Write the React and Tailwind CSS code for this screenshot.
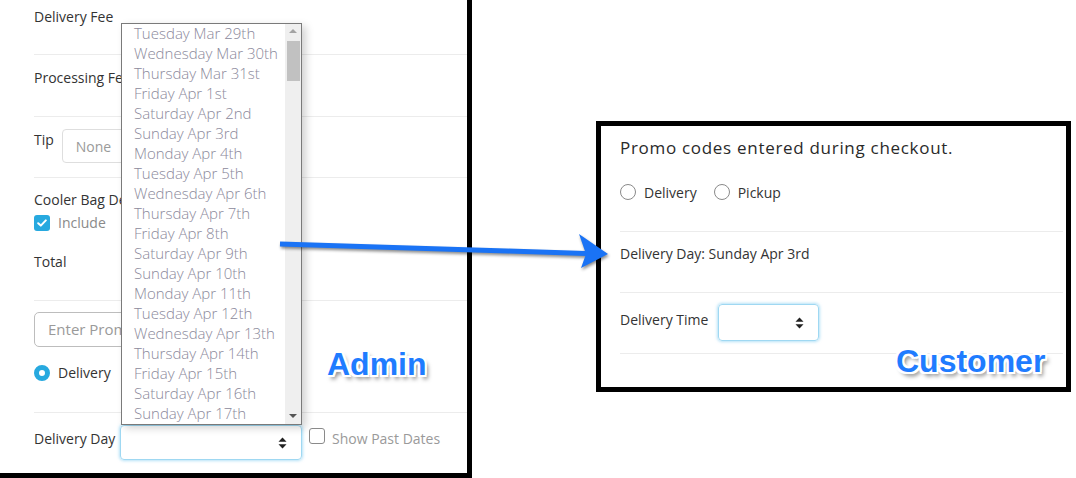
import React from "react";

const days = [
  "Tuesday Mar 29th",
  "Wednesday Mar 30th",
  "Thursday Mar 31st",
  "Friday Apr 1st",
  "Saturday Apr 2nd",
  "Sunday Apr 3rd",
  "Monday Apr 4th",
  "Tuesday Apr 5th",
  "Wednesday Apr 6th",
  "Thursday Apr 7th",
  "Friday Apr 8th",
  "Saturday Apr 9th",
  "Sunday Apr 10th",
  "Monday Apr 11th",
  "Tuesday Apr 12th",
  "Wednesday Apr 13th",
  "Thursday Apr 14th",
  "Friday Apr 15th",
  "Saturday Apr 16th",
  "Sunday Apr 17th",
];

function Carets() {
  return (
    <svg width="9" height="12" viewBox="0 0 9 12">
      <path d="M4.5 0.5 L8.5 4.8 L0.5 4.8 Z" fill="#222" />
      <path d="M4.5 11.5 L8.5 7.2 L0.5 7.2 Z" fill="#222" />
    </svg>
  );
}

const labelShadow =
  "[text-shadow:-2px_-2px_0_#fff,2px_-2px_0_#fff,-2px_2px_0_#fff,2px_2px_0_#fff,0_2px_0_#fff,0_-2px_0_#fff,2px_0_0_#fff,-2px_0_0_#fff,3px_4px_4px_rgba(0,0,0,0.5)]";

export default function App() {
  return (
    <div
      className="relative flex items-start w-[1076px] h-[478px] overflow-hidden bg-white text-[#333]"
      style={{ fontFamily: '"Open Sans", "Liberation Sans", sans-serif' }}
    >
      {/* Admin panel */}
      <div className="relative shrink-0 w-[472px] h-[478px] bg-white border-r-[5px] border-b-[5px] border-black pl-[34px] flex flex-col text-[14px]">
        <div className="h-[55px] border-b border-[#ececec] pt-[7px] leading-5">Delivery Fee</div>
        <div className="h-[62px] border-b border-[#ececec] pt-[13px] leading-5">
          <span className="block w-[87px] overflow-hidden whitespace-nowrap">Processing Fee</span>
        </div>
        <div className="h-[61px] border-b border-[#ececec] pt-[12px] flex items-start gap-[8px]">
          <span className="leading-5 mt-[1px]">Tip</span>
          <div className="w-[200px] h-[34px] border border-[#dedede] rounded-[4px] pl-[13px] flex items-center text-[#9a9a9a]">None</div>
        </div>
        <div className="h-[123px] border-b border-[#ececec] pt-[12px] flex flex-col">
          <span className="block w-[87px] overflow-hidden whitespace-nowrap leading-5">Cooler Bag Deposit</span>
          <div className="mt-[5px] h-[16px] flex items-center gap-[8px]">
            <span className="w-[16px] h-[16px] rounded-[3px] bg-[#27a9df] flex items-center justify-center">
              <svg width="10" height="8" viewBox="0 0 10 8">
                <path d="M1.2 4.2 L3.8 6.6 L8.8 1.4" stroke="#fff" strokeWidth="2" fill="none" strokeLinecap="round" strokeLinejoin="round" />
              </svg>
            </span>
            <span className="text-[#8a8a8a] leading-5">Include</span>
          </div>
          <span className="mt-[21px] leading-5">Total</span>
        </div>
        <div className="h-[112px] border-b border-[#ececec] pt-[11px] flex flex-col">
          <div className="w-[250px] h-[35px] border border-[#bdbdbd] rounded-[5px] pl-[13px] flex items-center text-[15px] text-[#9a9a9a]">
            <span className="block w-[73px] overflow-hidden whitespace-nowrap">Enter Promo Code</span>
          </div>
          <div className="mt-[18px] h-[16px] flex items-center gap-[8px]">
            <span className="w-[16px] h-[16px] rounded-full border-[5px] border-[#27a9df] bg-white" />
            <span className="leading-5">Delivery</span>
          </div>
        </div>
        <div className="pt-[12px] flex items-start">
          <span className="mt-[4px] leading-5 w-[86px]">Delivery Day</span>
          <div className="w-[182px] h-[35px] rounded-[4px] border border-[#9fd8f2] shadow-[0_0_3px_1px_rgba(120,200,240,0.55)] flex items-center justify-end pr-[14px]">
            <Carets />
          </div>
          <span className="mt-[3px] ml-[7px] w-[16px] h-[16px] rounded-[3px] border border-[#8a8a8a] bg-white" />
          <span className="mt-[4px] ml-[7px] leading-5 text-[#9a9a9a]">Show Past Dates</span>
        </div>

        {/* dropdown list */}
        <div className="absolute left-[121px] top-[23px] w-[181px] h-[402px] bg-white border border-[#7a7a7a] shadow-[4px_3px_8px_rgba(0,0,0,0.18)] flex">
          <div className="flex-1 pl-[12px] -mt-[1px] flex flex-col font-light text-[15px] text-[#8b899b]">
            {days.map((d) => (
              <div key={d} className="h-[20px] leading-[20px] whitespace-nowrap">{d}</div>
            ))}
          </div>
          <div className="w-[16px] bg-[#efefef] flex flex-col items-center">
            <svg width="16" height="17" viewBox="0 0 16 17">
              <path d="M8 5 L12 9 L4 9 Z" fill="#a3a3a3" />
            </svg>
            <div className="w-[13px] h-[40px] bg-[#c1c1c1]" />
            <div className="flex-1" />
            <svg width="16" height="17" viewBox="0 0 16 17">
              <path d="M8 11 L12 7 L4 7 Z" fill="#555" />
            </svg>
          </div>
        </div>
      </div>

      {/* Customer panel */}
      <div className="shrink-0 ml-[124px] mt-[121px] w-[475px] h-[271px] border-[5px] border-black bg-white pl-[19px] pr-[3px] flex flex-col">
        <div className="h-[106px] border-b border-[#ececec] pt-[10px] flex flex-col">
          <span className="text-[17px] leading-6 tracking-[0.7px] text-[#2a2a2a]">Promo codes entered during checkout.</span>
          <div className="mt-[22px] h-[20px] flex items-center text-[14px]">
            <span className="w-[16px] h-[16px] rounded-full border border-[#8a8a8a] bg-white" />
            <span className="ml-[8px]">Delivery</span>
            <span className="ml-[17px] w-[16px] h-[16px] rounded-full border border-[#8a8a8a] bg-white" />
            <span className="ml-[8px]">Pickup</span>
          </div>
        </div>
        <div className="h-[61px] border-b border-[#ececec] pt-[12px] text-[14px] leading-5">Delivery Day: Sunday Apr 3rd</div>
        <div className="h-[61px] border-b border-[#ececec] pt-[11px] flex items-start text-[14px]">
          <span className="mt-[6px] leading-5">Delivery Time</span>
          <div className="ml-[10px] w-[101px] h-[37px] rounded-[4px] border border-[#9fd8f2] shadow-[0_0_3px_1px_rgba(120,200,240,0.55)] flex items-center justify-end pr-[14px]">
            <Carets />
          </div>
        </div>
      </div>

      {/* Annotation arrow */}
      <svg className="absolute left-0 top-0 pointer-events-none [filter:drop-shadow(1px_2px_1.5px_rgba(0,0,0,0.45))]" width="1076" height="478" viewBox="0 0 1076 478">
        <path d="M280 244 L586 253.5" stroke="#1a73f5" strokeWidth="5" strokeLinecap="butt" />
        <path d="M579 234 L608 254 L581 268 L586 254 Z" fill="#1a73f5" />
      </svg>

      {/* Labels */}
      <div
        className={`absolute left-[327px] top-[348px] text-[32px] leading-[32px] font-bold text-[#1f7cff] ${labelShadow}`}
        style={{ fontFamily: '"Liberation Sans", Arial, sans-serif' }}
      >
        Admin
      </div>
      <div
        className={`absolute left-[896px] top-[345px] text-[32px] leading-[32px] font-bold text-[#1f7cff] ${labelShadow}`}
        style={{ fontFamily: '"Liberation Sans", Arial, sans-serif' }}
      >
        Customer
      </div>
    </div>
  );
}
